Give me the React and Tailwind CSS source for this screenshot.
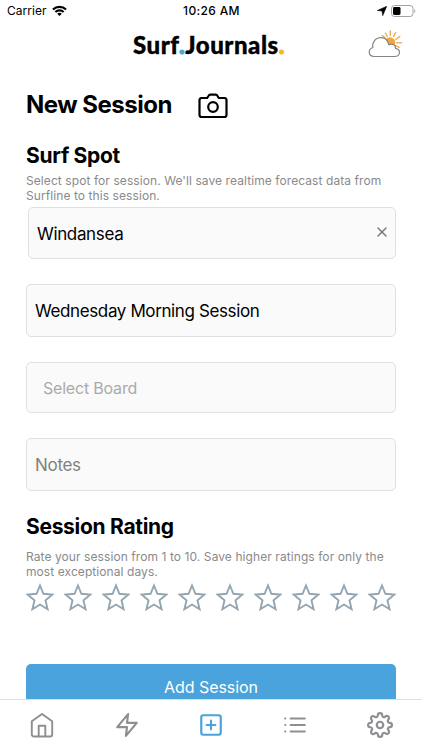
import { FiList, FiPlusSquare, FiSettings, FiX, FiZap } from "react-icons/fi"

function HomeIcon() {
  return (
    <svg width="24" height="26" viewBox="0 0 24 26" fill="none" stroke="currentColor" strokeWidth="1.9" strokeLinejoin="round">
      <path d="M1.8 9.200 12 2l10.200 7.200v13.300a2 2 0 0 1-2 2h-16.400a2 2 0 0 1-2-2z" />
      <path d="M8.700 24.500v-10.800h6.600v10.800" />
    </svg>
  )
}

const tabs = [
  { name: "Home", icon: HomeIcon },
  { name: "Activity", icon: FiZap },
  { name: "Add", icon: FiPlusSquare, active: true },
  { name: "Sessions", icon: FiList },
  { name: "Settings", icon: FiSettings },
]

function StatusBar() {
  return (
    <div className="grid grid-cols-3 items-center h-[22px] pl-[7px] pr-[6px] text-[12px] leading-none">
      <div className="flex items-center gap-[5px]">
        <span className="tracking-[0.05px]">Carrier</span>
        <svg width="15" height="12" viewBox="0 0 16 12" fill="none" stroke="black" strokeWidth="2.3">
          <path d="M1 4.400a10 10 0 0 1 14 0" />
          <path d="M3.600 7.100a6.300 6.300 0 0 1 8.800 0" />
          <path d="M8 11.400 5.500 8.900a3.700 3.700 0 0 1 5 0z" fill="black" stroke="none" />
        </svg>
      </div>
      <span className="text-center font-medium tracking-[0.35px]">10:26 AM</span>
      <div className="flex items-center justify-end gap-1">
        <svg width="10" height="10" viewBox="0 0 10 10">
          <path d="M9.800.2 5.700 9.800 5 5 .2 4.500z" fill="black" stroke="black" strokeWidth="0.5" />
        </svg>
        <svg width="25" height="12" viewBox="0 0 25 12">
          <rect x="0.5" y="0.5" width="21.5" height="11" rx="3" fill="none" stroke="#a3a3a3" />
          <rect x="2" y="2" width="7.500" height="8" rx="1.400" fill="black" />
          <path d="M23.300 4v4c1.400-.7 1.400-3.300 0-4z" fill="#a3a3a3" />
        </svg>
      </div>
    </div>
  )
}

function WeatherIcon() {
  return (
    <svg width="36" height="28" viewBox="0 0 36 28" className="shrink-0">
      <circle cx="22" cy="12.500" r="5.300" fill="#f0a63a" />
      <g stroke="#eba646" strokeWidth="1.300" strokeLinecap="round">
        <path d="M22.300 5.500V.8M25.500 6.500l2.200-4M27.800 9.500l4-3M28.700 12.800h5M27.700 15.500l3.500 1.800M19.300 6.500l-1.800-3.300M17 7.500l-3-2" />
      </g>
      <path
        d="M6 26.500h20.500c6 0 7-7.200 1-8.200.2-4-3.800-4.800-6.700-3.500C19 5.500 8 5.500 5 13.500c-.5 1.500-.4 2.500-.2 4C-.5 19.500.2 26 6 26.500z"
        fill="white"
        stroke="#858585"
        strokeWidth="1.200"
        strokeLinejoin="round"
      />
    </svg>
  )
}

function Header() {
  return (
    <header className="grid grid-cols-[80px_1fr_80px] items-center h-[46px]">
      <h1 className="col-start-2 -ml-1 text-center whitespace-nowrap font-['Lato'] font-black text-[24px] leading-none tracking-[0.55px] [-webkit-text-stroke:0.4px]">
        Surf<span className="text-[#4aa3dc] [-webkit-text-stroke:1.2px]">.</span>Journals
        <span className="text-[#f7b52c] [-webkit-text-stroke:1.2px]">.</span>
      </h1>
      <div className="flex justify-end pr-[18px] pb-[2px]">
        <WeatherIcon />
      </div>
    </header>
  )
}

function CameraIcon() {
  return (
    <svg width="30" height="26" viewBox="0 0 30 26" fill="none" stroke="black" strokeWidth="2.200" strokeLinejoin="round" className="mt-[2px]">
      <path d="M3.500 5h5.700l1.600-2.500c.3-.6.7-.9 1.400-.9h5.600c.7 0 1.100.3 1.400.9L20.800 5h5.700A2.300 2.300 0 0 1 28.500 7.300v14.400A2.300 2.300 0 0 1 26.200 24H3.800a2.300 2.300 0 0 1-2.300-2.300V7.300A2.300 2.300 0 0 1 3.500 5z" />
      <circle cx="15" cy="14" r="4.800" />
    </svg>
  )
}

function Field({ children, className = "" }) {
  return (
    <div className={`flex items-center rounded-[5px] border border-[#e0e0e2] bg-[#fafafa] ${className}`}>
      {children}
    </div>
  )
}

function Star() {
  return (
    <svg width="28" height="28" viewBox="0 0 28 28" fill="none" stroke="#93a5b0" strokeWidth="1.900">
      <path d="m14 2.500 3.400 8.300 9 .7-6.900 5.900 2.100 8.800-7.600-4.700-7.600 4.700 2.100-8.800-6.900-5.900 9-.7z" />
    </svg>
  )
}

function TabBar() {
  return (
    <nav className="grid grid-cols-5 h-[51px] shrink-0 border-t border-[#dedede] bg-white">
      {tabs.map(({ name, icon: Icon, active }) => (
        <button
          key={name}
          aria-label={name}
          className={`flex items-center justify-center ${active ? "text-[#4aa3dc]" : "text-[#8e8e93]"}`}
        >
          <Icon size={26} />
        </button>
      ))}
    </nav>
  )
}

export default function App() {
  return (
    <div className="flex flex-col h-[750px] w-[422px] overflow-hidden bg-white text-black font-['Inter',sans-serif]">
      <StatusBar />
      <Header />

      <main className="flex-1 min-h-0 overflow-hidden px-[26px] pt-[21px]">
        <div className="flex items-center gap-[26px] h-[32px]">
          <h2 className="text-[24px] leading-8 font-bold tracking-[-0.5px]">New Session</h2>
          <CameraIcon />
        </div>

        {/* Surf spot */}
        <h3 className="mt-[21px] text-[21px] leading-7 font-bold tracking-[-0.3px]">Surf Spot</h3>
        <p className="mt-[4px] text-[12px] leading-[14.5px] tracking-[0.08px] whitespace-nowrap text-[#8a8a8a]">
          Select spot for session. We'll save realtime forecast data from
          <br />
          Surfline to this session.
        </p>
        <Field className="mt-[4px] ml-[2px] h-[52px] pt-[3px] pl-2 pr-[5px] justify-between text-[17px] tracking-[-0.35px]">
          <span>Windansea</span>
          <FiX size={16} className="mb-[6px] text-[#777]" />
        </Field>
        <Field className="mt-[25px] h-[53px] pt-[3px] px-2 text-[17px] tracking-[-0.38px]">
          Wednesday Morning Session
        </Field>
        <Field className="mt-[25px] h-[51px] px-4 text-[16px] tracking-[-0.2px] text-[#aaa]">Select Board</Field>
        <Field className="mt-[25px] h-[53px] pt-[3px] px-2 text-[17px] tracking-[-0.3px] text-[#808080]">Notes</Field>

        {/* Rating */}
        <h3 className="mt-[22px] text-[21px] leading-7 font-bold tracking-[-0.3px]">Session Rating</h3>
        <p className="mt-[9px] text-[12px] leading-[14.5px] tracking-[0.08px] whitespace-nowrap text-[#8a8a8a]">
          Rate your session from 1 to 10. Save higher ratings for only the
          <br />
          most exceptional days.
        </p>
        <div className="flex justify-between mt-[4px]">
          {Array.from({ length: 10 }, (_, i) => (
            <Star key={i} />
          ))}
        </div>

        <button className="mt-[53px] h-[46px] w-full rounded-[5px] bg-[#4aa3dc] text-[16px] tracking-[-0.05px] text-white">
          Add Session
        </button>
      </main>

      <TabBar />
    </div>
  )
}
